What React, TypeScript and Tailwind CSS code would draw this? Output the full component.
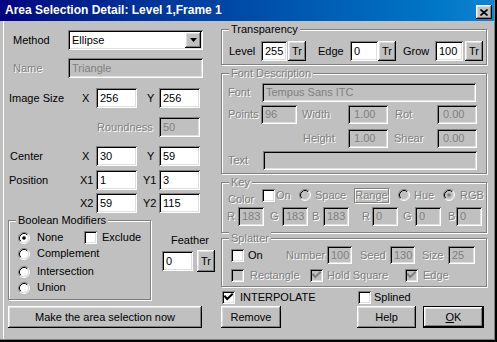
import React from "react";

const sunken =
  "shadow-[inset_1px_1px_#808080,inset_-1px_-1px_#fff,inset_2px_2px_#000,inset_-2px_-2px_#dfdfdf]";
const raised =
  "shadow-[inset_-1px_-1px_#000,inset_1px_1px_#fff,inset_-2px_-2px_#808080,inset_2px_2px_#dfdfdf]";
const dis = "text-[#808080] [text-shadow:1px_1px_0_#fff]";

function Field({
  className = "",
  value = "",
  disabled = false,
  children,
}: {
  className?: string;
  value?: string;
  disabled?: boolean;
  children?: React.ReactNode;
}) {
  return (
    <div
      className={`${sunken} flex shrink-0 items-center pl-[4px] ${
        disabled ? "bg-[#c0c0c0] text-[#808080]" : "bg-white text-black"
      } ${className}`}
    >
      <span className="flex-1 whitespace-nowrap">{value}</span>
      {children}
    </div>
  );
}

function Btn({ className = "", children }: { className?: string; children?: React.ReactNode }) {
  return (
    <div className={`${raised} flex shrink-0 items-center justify-center bg-[#c0c0c0] ${className}`}>
      {children}
    </div>
  );
}

function Check({ checked = false, disabled = false }: { checked?: boolean; disabled?: boolean }) {
  return (
    <div
      className={`${sunken} relative h-[13px] w-[13px] shrink-0 ${disabled ? "bg-[#c0c0c0]" : "bg-white"}`}
    >
      {checked && (
        <svg width="13" height="13" viewBox="0 0 13 13" className="absolute left-0 top-0">
          <path
            d="M3 5.5 L5.2 8 L10 3.5"
            fill="none"
            stroke={disabled ? "#808080" : "#000"}
            strokeWidth="2"
            strokeLinecap="square"
          />
        </svg>
      )}
    </div>
  );
}

function Radio({ checked = false, disabled = false }: { checked?: boolean; disabled?: boolean }) {
  return (
    <svg width="12" height="12" viewBox="0 0 12 12" className="shrink-0">
      <circle cx="6" cy="6" r="4.5" fill={disabled ? "#c0c0c0" : "#fff"} />
      <path d="M2.11 9.89 A5.5 5.5 0 0 1 9.89 2.11" fill="none" stroke="#808080" />
      <path d="M9.89 2.11 A5.5 5.5 0 0 1 2.11 9.89" fill="none" stroke="#fff" />
      <path d="M2.82 9.18 A4.5 4.5 0 0 1 9.18 2.82" fill="none" stroke="#000" />
      <path d="M9.18 2.82 A4.5 4.5 0 0 1 2.82 9.18" fill="none" stroke="#dfdfdf" />
      {checked && <circle cx="6" cy="6" r="1.8" fill={disabled ? "#808080" : "#000"} />}
    </svg>
  );
}

function Group({
  title,
  disabled = false,
  className = "",
  children,
}: {
  title: string;
  disabled?: boolean;
  className?: string;
  children?: React.ReactNode;
}) {
  return (
    <div
      className={`relative shrink-0 border border-[#808080] shadow-[inset_1px_1px_#fff,1px_1px_#fff] ${className}`}
    >
      <span
        className={`absolute left-[7px] top-[-8px] bg-[#c0c0c0] px-[2px] leading-[14px] whitespace-nowrap ${
          disabled ? dis : ""
        }`}
      >
        {title}
      </span>
      {children}
    </div>
  );
}

export default function App() {
  return (
    <div className="relative flex h-[342px] w-[497px] flex-col overflow-hidden bg-[#c0c0c0] font-['Liberation_Sans',Arial,sans-serif] text-[11px] leading-[13px] text-black shadow-[inset_-1px_-1px_#000,inset_-2px_-2px_#000,inset_-3px_-3px_#808080,inset_3px_0_#c0c0c0,inset_4px_0_#fff]">
      {/* Title bar */}
      <div className="mr-[3px] flex h-[21px] shrink-0 items-center bg-linear-to-r from-[#000080] to-[#1084d0] pl-[5px] pr-[2px]">
        <span className="flex-1 text-[12px] font-bold text-white">Area Selection Detail: Level 1,Frame 1</span>
        <Btn className="mt-[3px] h-[14px] w-[16px]">
          <svg width="8" height="7" viewBox="0 0 8 7">
            <path d="M0.5 0.5 L7.5 6.5 M7.5 0.5 L0.5 6.5" stroke="#000" strokeWidth="1.6" />
          </svg>
        </Btn>
      </div>

      <div className="flex flex-1">
        {/* Left column */}
        <div className="flex w-[216px] shrink-0 flex-col">
          <div className="mt-[9px] flex h-[20px] items-center">
            <span className="w-[68px] pl-[13px]">Method</span>
            <Field className="h-[20px] w-[135px] pr-[2px]" value="Ellipse">
              <Btn className="h-[16px] w-[16px]">
                <svg width="7" height="4" viewBox="0 0 7 4">
                  <path d="M0 0 H7 L3.5 4 Z" fill="#000" />
                </svg>
              </Btn>
            </Field>
          </div>
          <div className="mt-[8px] flex h-[20px] items-center">
            <span className={`w-[68px] pl-[13px] ${dis}`}>Name</span>
            <Field className="h-[20px] w-[135px]" value="Triangle" disabled />
          </div>
          <div className="mt-[10px] flex h-[20px] items-center">
            <span className="w-[82px] pl-[9px]">Image Size</span>
            <span className="w-[14px]">X</span>
            <Field className="h-[20px] w-[41px]" value="256" />
            <span className="w-[22px] pl-[10px]">Y</span>
            <Field className="h-[20px] w-[41px]" value="256" />
          </div>
          <div className="mt-[9px] flex h-[20px] items-center">
            <span className={`w-[159px] pl-[97px] ${dis}`}>Roundness</span>
            <Field className="h-[20px] w-[41px]" value="50" disabled />
          </div>
          <div className="mt-[9px] flex h-[20px] items-center">
            <span className="w-[82px] pl-[10px]">Center</span>
            <span className="w-[14px]">X</span>
            <Field className="h-[20px] w-[41px]" value="30" />
            <span className="w-[22px] pl-[10px]">Y</span>
            <Field className="h-[20px] w-[41px]" value="59" />
          </div>
          <div className="mt-[4px] flex h-[20px] items-center">
            <span className="w-[80px] pl-[9px]">Position</span>
            <span className="w-[16px]">X1</span>
            <Field className="h-[20px] w-[41px]" value="1" />
            <span className="w-[22px] pl-[6px]">Y1</span>
            <Field className="h-[20px] w-[41px]" value="3" />
          </div>
          <div className="mt-[3px] flex h-[20px] items-center">
            <span className="w-[80px]" />
            <span className="w-[16px]">X2</span>
            <Field className="h-[20px] w-[41px]" value="59" />
            <span className="w-[22px] pl-[6px]">Y2</span>
            <Field className="h-[20px] w-[41px]" value="115" />
          </div>

          <div className="mt-[7px] flex">
            <Group title="Boolean Modifiers" className="ml-[8px] h-[80px] w-[143px]">
              <div className="flex flex-col pl-[9px] pt-[10px]">
                <div className="flex h-[13px] items-center">
                  <Radio checked />
                  <span className="ml-[7px] w-[47px]">None</span>
                  <Check />
                  <span className="ml-[5px]">Exclude</span>
                </div>
                <div className="mt-[3px] flex h-[13px] items-center">
                  <Radio />
                  <span className="ml-[7px]">Complement</span>
                </div>
                <div className="mt-[5px] flex h-[13px] items-center">
                  <Radio />
                  <span className="ml-[7px]">Intersection</span>
                </div>
                <div className="mt-[3px] flex h-[13px] items-center">
                  <Radio />
                  <span className="ml-[7px]">Union</span>
                </div>
              </div>
            </Group>
            <div className="ml-[11px] flex flex-col">
              <span className="mt-[14px] h-[13px] pl-[9px]">Feather</span>
              <div className="mt-[3px] flex items-center">
                <Field className="h-[20px] w-[31px]" value="0" />
                <Btn className="ml-[4px] h-[22px] w-[18px]">Tr</Btn>
              </div>
            </div>
          </div>

          <Btn className="ml-[8px] mt-[6px] h-[22px] w-[194px]">Make the area selection now</Btn>
        </div>

        {/* Right column */}
        <div className="ml-[5px] flex w-[267px] shrink-0 flex-col pt-[8px]">
          <Group title="Transparency" className="h-[36px] w-[266px]">
            <div className="flex h-[20px] items-center pl-[7px] mt-[11px]">
              <span className="w-[32px]">Level</span>
              <Field className="h-[20px] w-[26px] pl-[2px]" value="255" />
              <Btn className="ml-[1px] h-[20px] w-[18px]">Tr</Btn>
              <span className="ml-[12px] w-[32px]">Edge</span>
              <Field className="h-[20px] w-[28px]" value="0" />
              <Btn className="h-[20px] w-[18px]">Tr</Btn>
              <span className="ml-[7px] w-[32px]">Grow</span>
              <Field className="h-[20px] w-[28px] pl-[2px]" value="100" />
              <Btn className="ml-[2px] h-[20px] w-[18px]">Tr</Btn>
            </div>
          </Group>

          <Group title="Font Description" disabled className="mt-[8px] h-[101px] w-[266px]">
            <div className="flex flex-col pl-[6px] pt-[9px]">
              <div className="flex h-[19px] items-center">
                <span className={`w-[34px] ${dis}`}>Font</span>
                <Field className="h-[19px] w-[214px]" value="Tempus Sans ITC" disabled />
              </div>
              <div className="mt-[3px] flex h-[19px] items-center">
                <span className={`w-[33px] ${dis}`}>Points</span>
                <Field className="h-[19px] w-[36px]" value="96" disabled />
                <span className={`ml-[5px] w-[46px] ${dis}`}>Width</span>
                <Field className="h-[19px] w-[40px] pl-[6px]" value="1.00" disabled />
                <span className={`ml-[7px] w-[42px] ${dis}`}>Rot</span>
                <Field className="h-[19px] w-[40px] pl-[6px]" value="0.00" disabled />
              </div>
              <div className="mt-[5px] flex h-[19px] items-center">
                <span className="w-[75px]" />
                <span className={`w-[45px] ${dis}`}>Height</span>
                <Field className="h-[19px] w-[40px] pl-[6px]" value="1.00" disabled />
                <span className={`ml-[6px] w-[43px] ${dis}`}>Shear</span>
                <Field className="h-[19px] w-[40px] pl-[6px]" value="0.00" disabled />
              </div>
              <div className="mt-[3px] flex h-[19px] items-center">
                <span className={`w-[35px] ${dis}`}>Text</span>
                <Field className="h-[19px] w-[214px]" disabled />
              </div>
            </div>
          </Group>

          <Group title="Key" disabled className="mt-[8px] h-[51px] w-[266px]">
            <div className="flex flex-col pt-[4px]">
              <div className="flex h-[16px] items-center pl-[6px]">
                <span className={`w-[34px] pt-[8px] ${dis}`}>Color</span>
                <Check />
                <span className={`ml-[1px] w-[23px] ${dis}`}>On</span>
                <Radio disabled />
                <span className={`ml-[4px] w-[39px] ${dis}`}>Space</span>
                <div
                  className={`flex h-[15px] w-[35px] shrink-0 items-center justify-center border border-[#808080] shadow-[inset_1px_1px_#fff,1px_1px_#fff] ${dis}`}
                >
                  Range
                </div>
                <span className="ml-[9px]">
                  <Radio disabled />
                </span>
                <span className={`ml-[4px] w-[29px] ${dis}`}>Hue</span>
                <Radio disabled checked />
                <span className={`ml-[5px] ${dis}`}>RGB</span>
              </div>
              <div className="mt-[4px] flex h-[19px] items-center pl-[5px]">
                <span className={`w-[11px] ${dis}`}>R</span>
                <Field className="h-[19px] w-[26px]" value="183" disabled />
                <span className={`ml-[6px] w-[12px] ${dis}`}>G</span>
                <Field className="h-[19px] w-[26px]" value="183" disabled />
                <span className={`ml-[4px] w-[11px] ${dis}`}>B</span>
                <Field className="h-[19px] w-[26px]" value="183" disabled />
                <span className={`ml-[13px] w-[10px] ${dis}`}>R</span>
                <Field className="h-[19px] w-[26px]" value="0" disabled />
                <span className={`ml-[5px] w-[12px] ${dis}`}>G</span>
                <Field className="h-[19px] w-[26px]" value="0" disabled />
                <span className={`ml-[7px] w-[8px] ${dis}`}>B</span>
                <Field className="h-[19px] w-[26px]" value="0" disabled />
              </div>
            </div>
          </Group>

          <Group title="Splatter" disabled className="mt-[5px] h-[49px] w-[266px]">
            <div className="flex flex-col pl-[9px] pt-[7px]">
              <div className="flex h-[18px] items-center">
                <Check />
                <span className="ml-[4px] w-[38px]">On</span>
                <span className={`w-[41px] ${dis}`}>Number</span>
                <Field className="h-[18px] w-[25px] pl-[2px]" value="100" disabled />
                <span className={`ml-[8px] w-[30px] ${dis}`}>Seed</span>
                <Field className="h-[18px] w-[25px] pl-[2px]" value="130" disabled />
                <span className={`ml-[7px] w-[26px] ${dis}`}>Size</span>
                <Field className="h-[18px] w-[27px]" value="25" disabled />
              </div>
              <div className="mt-[5px] flex h-[13px] items-center">
                <Check disabled />
                <span className={`ml-[6px] w-[60px] ${dis}`}>Rectangle</span>
                <Check disabled checked />
                <span className={`ml-[4px] w-[78px] ${dis}`}>Hold Square</span>
                <Check disabled checked />
                <span className={`ml-[5px] ${dis}`}>Edge</span>
              </div>
            </div>
          </Group>

          <div className="mt-[4px] flex h-[13px] items-center pl-[1px]">
            <Check checked />
            <span className="ml-[5px] w-[118px]">INTERPOLATE</span>
            <Check />
            <span className="ml-[3px]">Splined</span>
          </div>

          <div className="mt-[2px] flex h-[22px]">
            <Btn className="h-[22px] w-[60px]">Remove</Btn>
            <Btn className="ml-[76px] h-[22px] w-[59px]">Help</Btn>
            <div className="ml-[7px] h-[22px] w-[61px] border border-black">
              <Btn className="h-full w-full">
                <span>
                  <span className="underline">O</span>K
                </span>
              </Btn>
            </div>
          </div>
        </div>
      </div>
    </div>
  );
}
